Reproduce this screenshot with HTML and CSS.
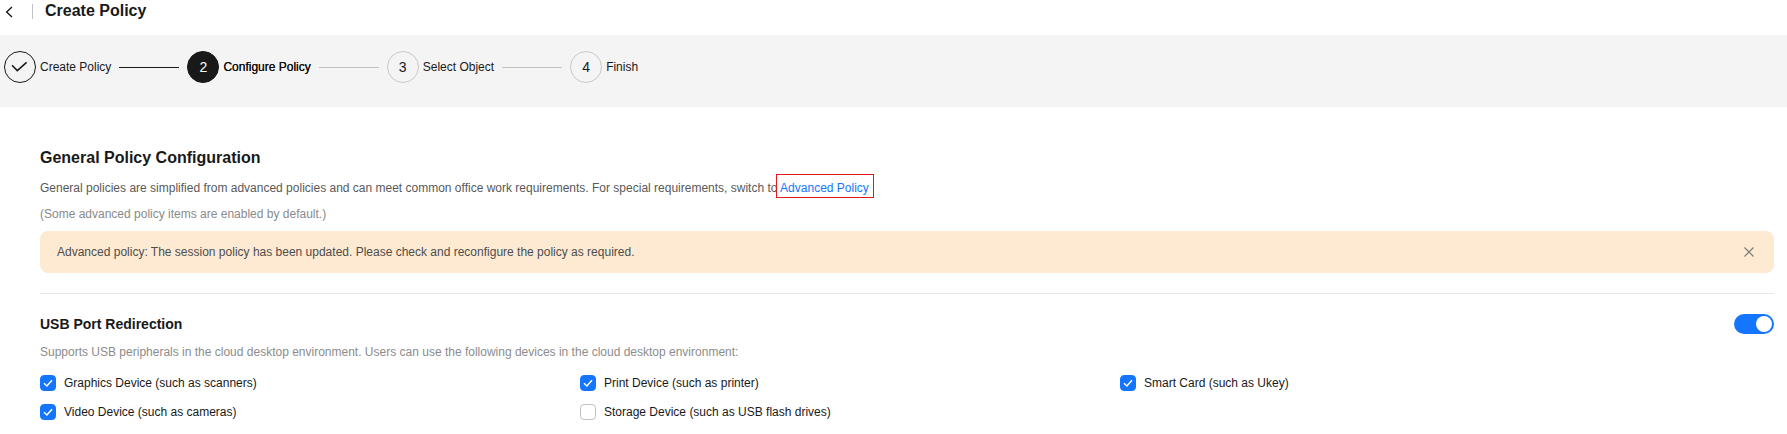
FILE: index.html
```html
<!DOCTYPE html>
<html lang="en">
<head>
<meta charset="utf-8">
<title>Create Policy</title>
<link rel="stylesheet" href="styles.css">
</head>
<body>
<header class="topbar">
  <span class="back"><svg width="8" height="12" viewBox="0 0 8 12"><path d="M7 1 L1.6 6 L7 11" fill="none" stroke="#191919" stroke-width="1.4"/></svg></span>
  <span class="vsep"></span>
  <h1 class="page-title">Create Policy</h1>
</header>

<div class="steps">
  <div class="step">
    <span class="dot dot-done"><svg width="32" height="32" viewBox="0 0 32 32"><path d="M8 14.2 L13.3 19.6 L22.6 11.4" fill="none" stroke="#191919" stroke-width="1.5"/></svg></span>
    <span class="step-label">Create Policy</span>
  </div>
  <span class="connector connector-done"></span>
  <div class="step">
    <span class="dot dot-active">2</span>
    <span class="step-label step-label-active">Configure Policy</span>
  </div>
  <span class="connector"></span>
  <div class="step">
    <span class="dot">3</span>
    <span class="step-label">Select Object</span>
  </div>
  <span class="connector"></span>
  <div class="step">
    <span class="dot">4</span>
    <span class="step-label">Finish</span>
  </div>
</div>

<main class="main">
  <h2 class="section-title">General Policy Configuration</h2>
  <p class="desc">General policies are simplified from advanced policies and can meet common office work requirements. For special requirements, switch to <span class="annot"><a class="link">Advanced Policy</a></span></p>
  <p class="note">(Some advanced policy items are enabled by default.)</p>

  <div class="alert">
    <span>Advanced policy: The session policy has been updated. Please check and reconfigure the policy as required.</span>
    <svg class="close" width="10" height="10" viewBox="0 0 10 10"><path d="M0.5 0.5 L9.5 9.5 M9.5 0.5 L0.5 9.5" stroke="#7a7a7a" stroke-width="1.2" fill="none"/></svg>
  </div>

  <div class="divider"></div>

  <div class="section-head">
    <h3 class="sub-title">USB Port Redirection</h3>
    <span class="toggle"><span class="knob"></span></span>
  </div>
  <p class="section-desc">Supports USB peripherals in the cloud desktop environment. Users can use the following devices in the cloud desktop environment:</p>

  <div class="options">
    <label class="opt"><span class="cb cb-on"><svg width="16" height="16" viewBox="0 0 16 16"><path d="M4 8.3 L6.9 11 L12 5.3" fill="none" stroke="#fff" stroke-width="1.5"/></svg></span>Graphics Device (such as scanners)</label>
    <label class="opt"><span class="cb cb-on"><svg width="16" height="16" viewBox="0 0 16 16"><path d="M4 8.3 L6.9 11 L12 5.3" fill="none" stroke="#fff" stroke-width="1.5"/></svg></span>Print Device (such as printer)</label>
    <label class="opt"><span class="cb cb-on"><svg width="16" height="16" viewBox="0 0 16 16"><path d="M4 8.3 L6.9 11 L12 5.3" fill="none" stroke="#fff" stroke-width="1.5"/></svg></span>Smart Card (such as Ukey)</label>
    <label class="opt"><span class="cb cb-on"><svg width="16" height="16" viewBox="0 0 16 16"><path d="M4 8.3 L6.9 11 L12 5.3" fill="none" stroke="#fff" stroke-width="1.5"/></svg></span>Video Device (such as cameras)</label>
    <label class="opt"><span class="cb"></span>Storage Device (such as USB flash drives)</label>
  </div>
</main>
</body>
</html>
```

FILE: styles.css
```css
* { box-sizing: border-box; }
html, body { margin: 0; padding: 0; background: #fff; }
body {
  font-family: "Liberation Sans", Arial, sans-serif;
  color: #191919;
  font-size: 12px;
}

.topbar {
  display: flex;
  align-items: center;
  height: 22px;
  padding-left: 5px;
}
.back { display: flex; width: 8px; height: 12px; margin-top: 2px; }
.vsep {
  width: 1px;
  height: 15px;
  background: #c2c2c2;
  margin-left: 19px;
}
.page-title {
  margin: 0 0 0 12px;
  font-size: 16px;
  font-weight: bold;
  line-height: 22px;
}

.steps {
  margin-top: 13px;
  height: 72px;
  background: #f4f4f4;
  display: flex;
  align-items: flex-start;
  padding: 16px 0 0 4px;
}
.step { display: flex; align-items: center; height: 32px; }
.dot {
  width: 32px;
  height: 32px;
  border-radius: 50%;
  border: 1px solid #c9c9c9;
  display: flex;
  align-items: center;
  justify-content: center;
  font-size: 14px;
  color: #191919;
}
.dot-done { border-color: #191919; }
.dot-done svg { display: block; margin: -1px; }
.dot-active { background: #191919; border-color: #191919; color: #fff; }
.step-label { margin-left: 4px; font-size: 12px; line-height: 20px; color: #191919; }
.step-label-active { color: #111; text-shadow: 0 0 0.3px #111; }
.connector {
  width: 60px;
  height: 1px;
  background: #c2c2c2;
  margin: 16px 8px 0;
}
.connector-done { background: #191919; }

.main { padding: 0 13px 0 40px; }

.section-title {
  margin: 39px 0 0;
  font-size: 16px;
  font-weight: bold;
  line-height: 24px;
}
.desc {
  margin: 8px 0 0;
  line-height: 20px;
  color: #595959;
}
.note {
  margin: 6px 0 0;
  line-height: 20px;
  color: #8a8a8a;
}
.annot { position: relative; }
.annot::after {
  content: "";
  position: absolute;
  left: -4px;
  right: -5px;
  top: -7px;
  bottom: -3px;
  border: 1px solid #e3191e;
}
.link { color: #1476ff; text-decoration: none; }

.alert {
  margin-top: 7px;
  display: flex;
  align-items: center;
  justify-content: space-between;
  background: #feead2;
  border-radius: 8px;
  padding: 11px 20px 11px 17px;
  line-height: 20px;
  color: #4d4d4d;
}
.close { display: block; }

.divider {
  margin-top: 20px;
  height: 1px;
  background: #e8e8e8;
}

.section-head {
  margin-top: 20px;
  height: 20px;
  display: flex;
  align-items: center;
  justify-content: space-between;
}
.sub-title {
  margin: 0;
  font-size: 14px;
  font-weight: bold;
  line-height: 20px;
}
.toggle {
  width: 40px;
  height: 20px;
  border-radius: 10px;
  background: #1476ff;
  display: flex;
  justify-content: flex-end;
  align-items: center;
  padding: 2px;
}
.knob {
  width: 16px;
  height: 16px;
  border-radius: 50%;
  background: #fff;
}
.section-desc {
  margin: 8px 0 0;
  line-height: 20px;
  color: #8c8c8c;
}

.options {
  margin-top: 11px;
  display: grid;
  grid-template-columns: 540px 540px 540px;
  row-gap: 9px;
}
.opt {
  display: flex;
  align-items: center;
  gap: 8px;
  height: 20px;
  line-height: 20px;
  color: #191919;
}
.cb {
  width: 16px;
  height: 16px;
  border-radius: 4px;
  border: 1px solid #c2c2c2;
  background: #fff;
  flex: none;
}
.cb-on { background: #1476ff; border-color: #1476ff; }
.cb-on svg { display: block; margin: -1px; }
```
